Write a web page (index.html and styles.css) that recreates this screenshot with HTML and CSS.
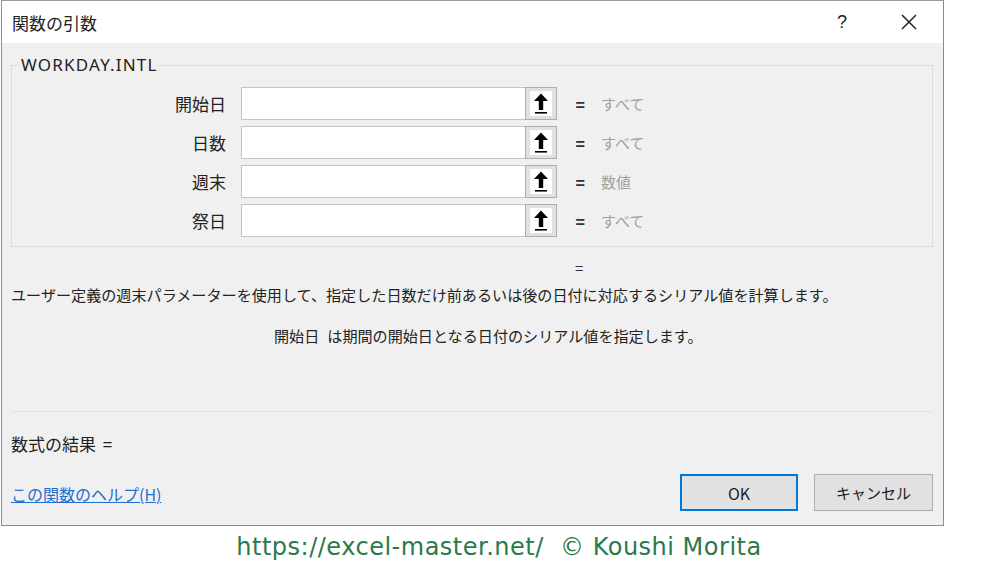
FILE: index.html
```html
<!DOCTYPE html>
<html lang="ja">
<head>
<meta charset="utf-8">
<link rel="stylesheet" href="styles.css">
</head>
<body>
<div class="dialog">
  <div class="titlebar">
    <span class="title">関数の引数</span>
    <span class="help">?</span>
    <span class="close"><svg width="16" height="16" viewBox="0 0 16 16"><path d="M1 1L15 15M15 1L1 15" stroke="#222" stroke-width="1.5" fill="none"/></svg></span>
  </div>
  <div class="content">
    <fieldset class="group">
      <legend>WORKDAY.INTL</legend>
      <div class="args">
        <div class="label">開始日</div><div class="input"></div><div class="refbtn"><svg width="22" height="25" viewBox="0 0 22 25"><rect width="22" height="25" fill="#fff"/><path d="M11 2.5L4 10H8.8V19H13.2V10H18Z" fill="#000"/><rect x="5" y="21" width="12" height="1.6" fill="#000"/></svg></div><div class="eq">=</div><div class="val">すべて</div>
        <div class="label">日数</div><div class="input"></div><div class="refbtn"><svg width="22" height="25" viewBox="0 0 22 25"><rect width="22" height="25" fill="#fff"/><path d="M11 2.5L4 10H8.8V19H13.2V10H18Z" fill="#000"/><rect x="5" y="21" width="12" height="1.6" fill="#000"/></svg></div><div class="eq">=</div><div class="val">すべて</div>
        <div class="label">週末</div><div class="input"></div><div class="refbtn"><svg width="22" height="25" viewBox="0 0 22 25"><rect width="22" height="25" fill="#fff"/><path d="M11 2.5L4 10H8.8V19H13.2V10H18Z" fill="#000"/><rect x="5" y="21" width="12" height="1.6" fill="#000"/></svg></div><div class="eq">=</div><div class="val">数値</div>
        <div class="label">祭日</div><div class="input"></div><div class="refbtn"><svg width="22" height="25" viewBox="0 0 22 25"><rect width="22" height="25" fill="#fff"/><path d="M11 2.5L4 10H8.8V19H13.2V10H18Z" fill="#000"/><rect x="5" y="21" width="12" height="1.6" fill="#000"/></svg></div><div class="eq">=</div><div class="val">すべて</div>
      </div>
    </fieldset>
    <div class="result-eq">=</div>
    <p class="desc">ユーザー定義の週末パラメーターを使用して、指定した日数だけ前あるいは後の日付に対応するシリアル値を計算します。</p>
    <p class="argdesc"><span class="argname">開始日</span>は期間の開始日となる日付のシリアル値を指定します。</p>
    <div class="sep"></div>
    <div class="formula">数式の結果 <span class="feq">=</span></div>
    <div class="footer">
      <a class="helplink" href="#">この関数のヘルプ(H)</a>
      <div class="buttons">
        <button class="btn ok">OK</button>
        <button class="btn">キャンセル</button>
      </div>
    </div>
  </div>
</div>
<div class="watermark">https://excel-master.net/&nbsp; © Koushi Morita</div>
</body>
</html>
```
FILE: styles.css
```css
* { box-sizing: border-box; }
html, body { margin: 0; padding: 0; background: #fff; }
body {
  width: 1000px;
  height: 563px;
  overflow: hidden;
  font-family: "Noto Sans CJK JP", "Noto Sans", sans-serif;
  color: #222;
}
.dialog {
  margin-left: 1px;
  width: 943px;
  height: 526px;
  border: 1px solid #8c8c8c;
  border-top: 1px solid #9a9a9a;
  background: #f0f0f0;
  display: flex;
  flex-direction: column;
}
.titlebar {
  height: 42px;
  background: #fff;
  display: flex;
  align-items: center;
  padding-left: 10px;
}
.title { font-size: 17px; color: #222; flex: 1; }
.help { font-size: 18px; width: 18px; text-align: center; margin-right: 50px; color: #222; font-family: "Liberation Sans", sans-serif; }
.close { width: 16px; height: 16px; margin-right: 26px; display: flex; }
.content {
  flex: 1;
  padding: 0 10px 0 9px;
  display: flex;
  flex-direction: column;
}
.group {
  margin: 12px 0 0 0;
  padding: 12px 0 9px 0;
  border: 1px solid #dcdcdc;
  min-width: 0;
}
.group legend {
  font-size: 17px;
  letter-spacing: 1.2px;
  color: #222;
  padding: 0 1px;
  margin-left: 8px;
  line-height: 20px;
  font-family: "Noto Sans", "Noto Sans CJK JP", sans-serif;
}
.args {
  display: grid;
  grid-template-columns: 229px 284px 32px 28px 1fr;
  grid-auto-rows: 33px;
  row-gap: 6px;
  column-gap: 0;
  align-items: center;
}
.label {
  font-size: 17px;
  text-align: right;
  margin-right: 15px;
  color: #222;
}
.input {
  height: 33px;
  background: #fff;
  border: 1px solid #c5c5c5;
  border-right: none;
}
.refbtn {
  height: 33px;
  background: #e1e1e1;
  border: 1px solid #adadad;
  display: flex;
  align-items: center;
  justify-content: center;
}
.eq {
  font-size: 16px;
  text-align: right;
  font-weight: bold;
  color: #333;
}
.val {
  font-size: 15px;
  color: #a0a0a0;
  padding-left: 16px;
}
.result-eq {
  margin-top: 9px;
  margin-left: 564px;
  font-size: 15px;
  line-height: 24px;
  color: #333;
}
.desc {
  margin: 2px 0 0 0;
  font-size: 15.1px;
  line-height: 24px;
  color: #222;
}
.argdesc {
  margin: 17px 0 0 263px;
  font-size: 15.1px;
  line-height: 24px;
  color: #222;
}
.argname { margin-right: 8px; }
.sep {
  margin-top: 64px;
  height: 1px;
  background: #e2e2e2;
}
.formula {
  margin-top: 20px;
  font-size: 17px;
  line-height: 24px;
  color: #222;
}
.feq { margin-left: 3px; }
.footer {
  margin-top: 18px;
  display: flex;
  align-items: center;
  justify-content: space-between;
}
.helplink {
  font-size: 16px;
  color: #1e6fd0;
  text-decoration: underline;
  margin-top: 2px;
}
.buttons { display: flex; gap: 16px; }
.btn {
  width: 119px;
  height: 37px;
  background: #e1e1e1;
  border: 1px solid #adadad;
  font-family: "Noto Sans CJK JP", "Noto Sans", sans-serif;
  font-size: 15px;
  color: #222;
  padding: 0;
}
.btn.ok { width: 118px; border: 2px solid #0078d7; font-size: 16px; }
.watermark {
  text-align: center;
  font-family: "DejaVu Sans", "Noto Sans", sans-serif;
  font-size: 24px;
  letter-spacing: 0.5px;
  color: #2a7a4a;
  line-height: 30px;
  margin-top: 6px;
  padding-right: 2px;
}
```
